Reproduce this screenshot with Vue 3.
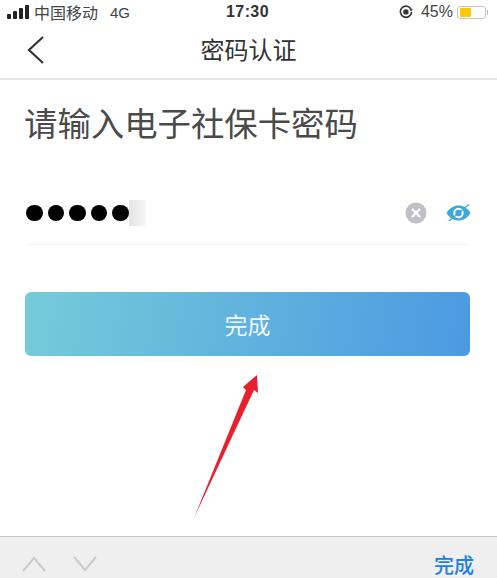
<template>
  <div class="page">
    <div class="status">
      <div class="status-left">
        <span class="signal"><i v-for="h in bars" :key="h" :style="{ height: h + 'px' }"></i></span>
        <span class="carrier">中国移动</span>
        <span class="net">4G</span>
      </div>
      <div class="clock">17:30</div>
      <div class="status-right">
        <svg class="lock" width="14" height="14" viewBox="0 0 14 14">
          <path d="M12.200 4.600A5.600 5.600 0 1 0 12.600 7" fill="none" stroke="#333" stroke-width="1.600" />
          <path d="M10.400 4.200h3.400l-1.700 2.400z" fill="#333" />
          <rect x="4.200" y="4.200" width="5.400" height="5.400" rx="2.700" fill="#333" />
        </svg>
        <span class="percent">45%</span>
        <span class="battery"><i></i></span>
        <span class="battery-cap"></span>
      </div>
    </div>

    <header class="nav">
      <svg class="back" width="20" height="30" viewBox="0 0 20 30">
        <path d="M17 3 L3 16 L17 29" fill="none" stroke="#333" stroke-width="2.200" />
      </svg>
      <span class="nav-title">密码认证</span>
    </header>

    <main class="content">
      <h1>请输入电子社保卡密码</h1>
      <div class="field">
        <div class="dots">
          <i v-for="n in 5" :key="n"></i>
          <span class="cursor"></span>
        </div>
        <div class="field-icons">
          <svg width="22" height="22" viewBox="0 0 22 22">
            <circle cx="11" cy="11" r="10.500" fill="#c0c1c8" />
            <path d="M7 7l8 8M15 7l-8 8" stroke="#fff" stroke-width="2.400" />
          </svg>
          <svg width="25" height="20" viewBox="0 0 25 20">
            <path d="M0.500 10 C6 0 19 0 24.500 10 C19 20 6 20 0.500 10Z" fill="#3ea9dc" />
            <circle cx="12.500" cy="10" r="4.200" fill="none" stroke="#fff" stroke-width="2" />
            <path d="M3 18 L23 1.500" stroke="#3ea9dc" stroke-width="1.200" />
          </svg>
        </div>
      </div>
      <button class="submit">完成</button>
    </main>

    <svg class="arrow" width="70" height="150" viewBox="0 0 70 150">
      <path d="M1 148 L53 20 L50 17 L64 5 L65 23 L61 20 Z" fill="#ea1f2d" />
    </svg>

    <footer class="toolbar">
      <div class="toolbar-arrows">
        <svg width="24" height="16" viewBox="0 0 24 16">
          <path d="M1 15 L12 2 L23 15" fill="none" stroke="#c9c9c9" stroke-width="2" />
        </svg>
        <svg width="24" height="16" viewBox="0 0 24 16">
          <path d="M1 1 L12 14 L23 1" fill="none" stroke="#c9c9c9" stroke-width="2" />
        </svg>
      </div>
      <span class="done">完成</span>
    </footer>
  </div>
</template>

<script setup>
const bars = [5, 8, 11, 14]
</script>

<style>
html, body { margin: 0; background: #fff; }
</style>

<style scoped>
.page {
  position: relative;
  width: 497px;
  height: 578px;
  overflow: hidden;
  display: flex;
  flex-direction: column;
  background: #fff;
  font-family: "Liberation Sans", "Noto Sans CJK SC", sans-serif;
  color: #333;
}
.status {
  height: 14px;
  display: grid;
  grid-template-columns: 1fr auto 1fr;
  align-items: center;
  padding: 0 9px 0 7px;
  font-size: 16px;
  color: #444;
}
.status-left { display: flex; align-items: center; }
.signal { display: flex; align-items: flex-end; gap: 2px; margin-right: 5px; }
.signal i { width: 4px; background: #222; border-radius: 1px; }
.carrier { font-size: 16px; margin-right: 12px; }
.net { font-size: 15px; }
.clock { font-size: 16px; font-weight: bold; color: #333; letter-spacing: 0.4px; }
.status-right { display: flex; align-items: center; justify-content: flex-end; }
.lock { margin-right: 8px; }
.percent { margin-right: 4px; }
.battery {
  width: 29px;
  height: 13px;
  box-sizing: border-box;
  border: 1px solid #c4c4c4;
  border-radius: 3px;
  padding: 1px 2px;
  display: flex;
}
.battery i { width: 11px; background: #ffc800; border-radius: 1px; }
.battery-cap { width: 1px; height: 5px; background: #bbb; margin-left: 1px; }

.nav {
  position: relative;
  height: 66px;
  box-sizing: border-box;
  border-bottom: 2px solid #e6e6e6;
  display: flex;
  align-items: center;
  justify-content: center;
}
.back { position: absolute; left: 26px; top: 20px; }
.nav-title { font-size: 24px; color: #333; margin-top: 4px; }

.content { flex: 1; padding: 0 27px 0 25px; }
h1 {
  margin: 25px 0 0 -1px;
  font-size: 33.400px;
  line-height: 40px;
  font-weight: normal;
  color: #4a4a4a;
}
.field {
  margin: 45px 0 0 1px;
  height: 55px;
  box-sizing: border-box;
  border-bottom: 1px solid #f2f2f2;
  padding-bottom: 8px;
  display: flex;
  align-items: center;
  justify-content: space-between;
}
.dots { display: flex; align-items: center; gap: 5px; }
.dots i { width: 16.500px; height: 16.500px; border-radius: 50%; background: #000; }
.cursor { width: 16px; height: 26px; margin-left: -5px; background: linear-gradient(90deg, #e4e4e4, #f4f4f4); }
.field-icons { display: flex; align-items: center; gap: 19px; margin-right: -1px; }
.submit {
  display: block;
  width: 445px;
  height: 64px;
  margin-top: 47px;
  border: none;
  border-radius: 6px;
  background: linear-gradient(100deg, #76cbd9, #4c99e2);
  color: #f2f8fb;
  font-size: 23px;
  font-family: inherit;
}
.arrow { position: absolute; left: 193px; top: 370px; }

.toolbar {
  height: 42px;
  box-sizing: border-box;
  border-top: 1px solid #c8c8c8;
  background: #efefef;
  display: flex;
  align-items: center;
  justify-content: space-between;
  padding: 0 23px 0 22px;
}
.toolbar-arrows { display: flex; gap: 27px; margin-top: 12px; }
.done { font-size: 20px; color: #1f80e2; margin-top: 14px; font-weight: 500; }
</style>
